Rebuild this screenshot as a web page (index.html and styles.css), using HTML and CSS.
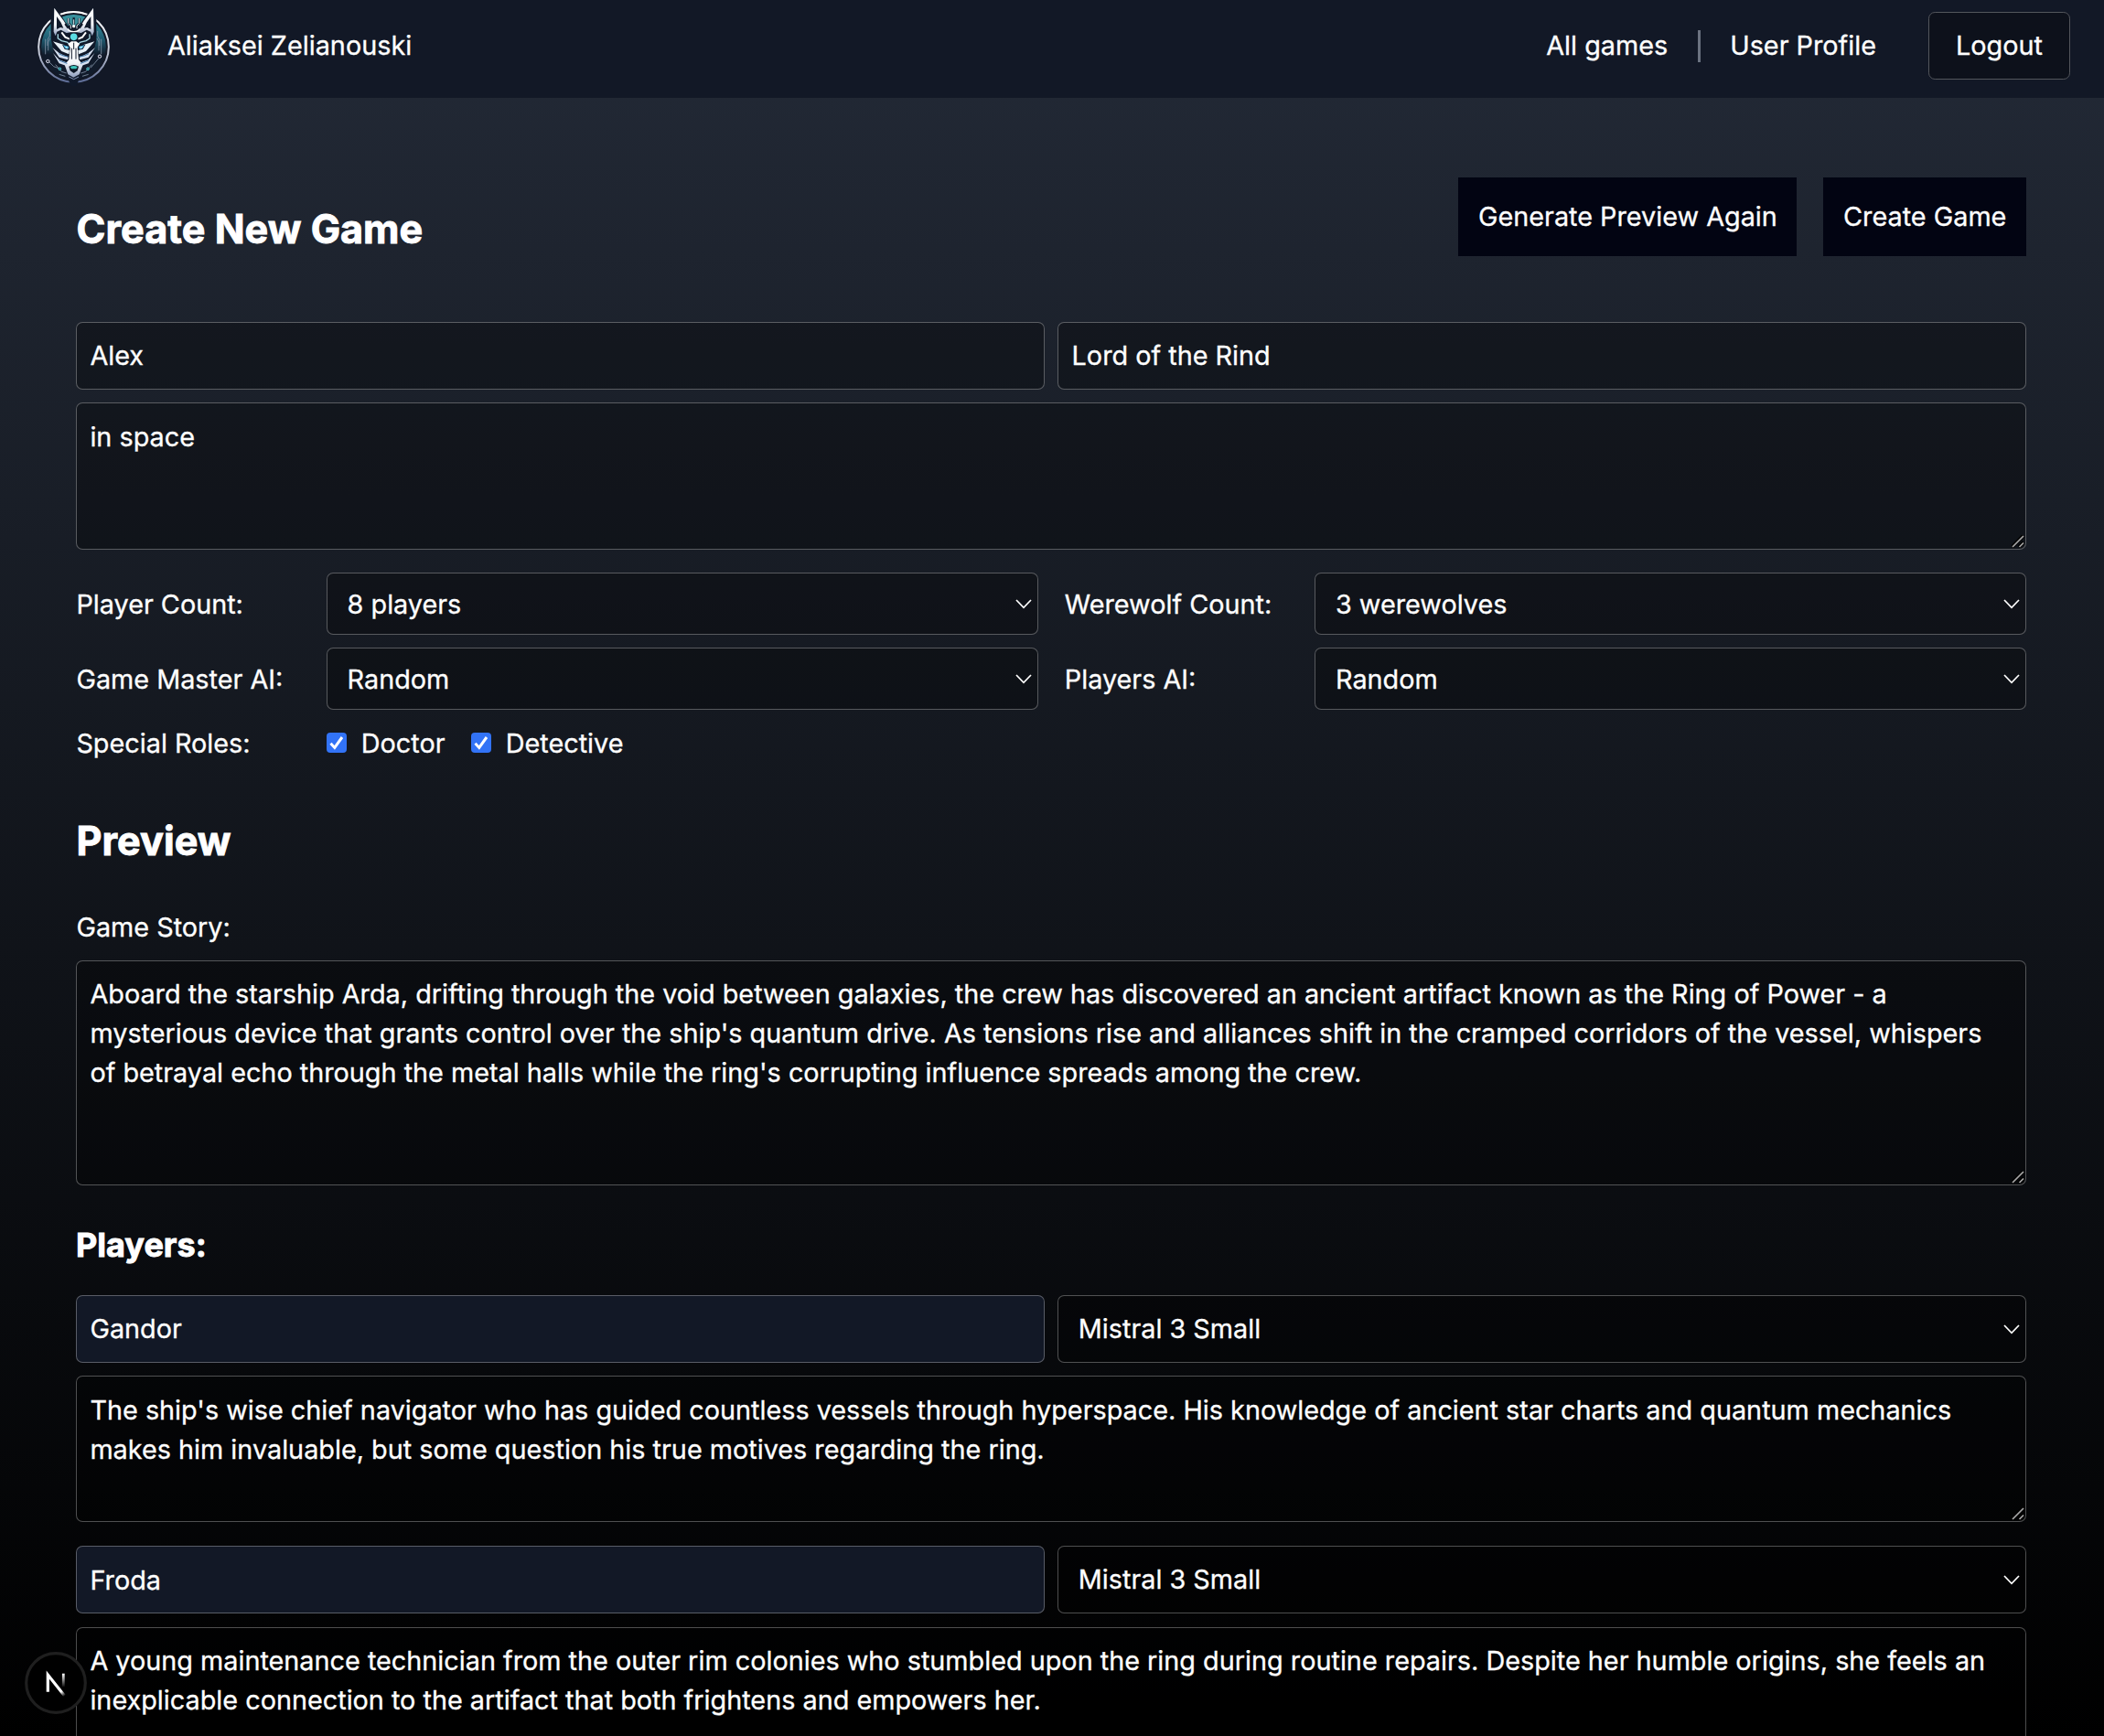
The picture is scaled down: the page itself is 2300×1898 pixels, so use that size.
FILE: index.html
```html
<!DOCTYPE html>
<html lang="en">
<head>
<meta charset="utf-8">
<title>Create New Game</title>
<link rel="stylesheet" href="styles.css">
</head>
<body>
<svg class="defs" width="0" height="0" aria-hidden="true">
  <symbol id="chevron" viewBox="0 0 18 11"><path d="M1 1 L9 9.3 L17 1" fill="none" stroke="#fff" stroke-width="1.7"/></symbol>
  <symbol id="grip" viewBox="0 0 14 14"><path d="M0.5 13 L13 0.5 M8 13 L13 8" fill="none" stroke="#000" stroke-width="4"/><path d="M1 13 L13 1 M8.5 13 L13 8.5" fill="none" stroke="#a9a9a9" stroke-width="1.7"/></symbol>
  <symbol id="check" viewBox="0 0 22 22"><path d="M4.5 11.8 L8.8 16.4 L17 5" fill="none" stroke="#fff" stroke-width="3"/></symbol>
</svg>
<header class="topbar">
  <svg class="logo" viewBox="0 0 300 300" aria-label="Werewolf logo">
    <defs>
      <linearGradient id="ring" x1="0" y1="0" x2="0" y2="1"><stop offset="0" stop-color="#fff"/><stop offset=".55" stop-color="#c9cedb"/><stop offset="1" stop-color="#5c6b95"/></linearGradient>
      <linearGradient id="sky" x1="0" y1="0" x2="0" y2="1"><stop offset="0" stop-color="#3d9fac"/><stop offset=".38" stop-color="#1f5b70"/><stop offset=".62" stop-color="#111b2b"/></linearGradient>
      <linearGradient id="fur" x1="0" y1="0" x2="0" y2="1"><stop offset="0" stop-color="#fff"/><stop offset=".6" stop-color="#f2f4f8"/><stop offset="1" stop-color="#8d9dbd"/></linearGradient>
    </defs>
    <circle cx="151.5" cy="154" r="106" fill="url(#sky)"/>
    <circle cx="151.5" cy="154" r="115" fill="none" stroke="url(#ring)" stroke-width="6"/>
    <path d="M88 22 L76 60 L78 132 L92 200 L130 254 L144 282 L160 282 L172 254 L210 200 L226 132 L226 60 L216 22 L186 60 L118 60 Z" fill="#10192a"/>
    <path d="M113 45 Q151 33 189 45" fill="none" stroke="#fff" stroke-width="5"/>
    <path d="M115 58 Q151 44 187 58 L170 84 L132 84 Z" fill="#398f9b"/>
    <path fill-rule="evenodd" d="M88 26 L119 68 L142 106 L128 108 L110 98 L97 104 L92 118 L86 104 Z M96 54 V96 L108 90 L118 92 L110 74 Z M216 26 L185 68 L162 106 L176 108 L194 98 L207 104 L212 118 L218 104 Z M208 54 V96 L196 90 L186 92 L194 74 Z" fill="url(#fur)"/>
    <path d="M134 60 V76 L142 84 V94 M152 58 V80 M170 60 V76 L162 84 V94 M124 78 L134 92 M180 78 L170 92" fill="none" stroke="#10192a" stroke-width="7"/>
    <path d="M134 60 V76 L142 84 V94 M152 64 V80 M170 60 V76 L162 84 V94" fill="none" stroke="#dfe9ef" stroke-width="3"/>
    <circle cx="152" cy="86" r="5" fill="#fff"/>
    <path d="M132 97 Q152 112 172 97" fill="none" stroke="#fff" stroke-width="5"/>
    <path d="M100 112 V126 L112 134 L130 138 L143 149 V160 M204 112 V126 L192 134 L174 138 L161 149 V160" fill="none" stroke="#a9dbe6" stroke-width="4"/>
    <path d="M112 106 L124 122 L138 128 M192 106 L180 122 L166 128" fill="none" stroke="#fff" stroke-width="6"/>
    <path d="M133 144 L140 156 L136 196 L122 212 L133 244 L151 254 L170 244 L182 212 L168 196 L164 156 L171 144 L160 136 H144 Z" fill="url(#fur)"/>
    <path d="M152 140 V162 M145 158 V194 M159 158 V194" stroke="#10192a" stroke-width="3"/>
    <path d="M84 136 L118 146 L138 166 L136 178 L112 168 Z M220 136 L186 146 L166 166 L168 178 L192 168 Z" fill="#e8f1f8"/>
    <path d="M82 156 L104 174 L134 188 L132 196 L104 188 Z M222 156 L200 174 L170 188 L172 196 L200 188 Z M84 174 L104 196 L132 206 L128 216 L104 208 Z M220 174 L200 196 L172 206 L176 216 L200 208 Z" fill="#d5e0f0"/>
    <path d="M103 176 Q116 184 133 186 M201 176 Q188 184 171 186 M104 198 L130 208 M200 198 L174 208" fill="none" stroke="#3d77aa" stroke-width="3"/>
    <path d="M114 146 L138 152 L136 164 L122 161 Z M190 146 L166 152 L168 164 L182 161 Z" fill="#10192a"/>
    <path d="M117 148 L136 153 L133 161 L124 159 Z M187 148 L168 153 L171 161 L180 159 Z" fill="#50b9e6"/>
    <circle cx="128" cy="155" r="2.5" fill="#c9f6ff"/><circle cx="176" cy="155" r="2.5" fill="#c9f6ff"/>
    <circle cx="152" cy="121" r="15" fill="#10192a"/><circle cx="152" cy="121" r="11.5" fill="#5adce3"/>
    <path d="M136 218 Q152 208 168 218 L164 232 L152 240 L140 232 Z" fill="#0c1725"/>
    <path d="M140 219 Q152 213 164 219 L160 226 H144 Z" fill="#3cc6bd"/>
    <path d="M136 252 L152 260 L168 252" fill="none" stroke="#8091b4" stroke-width="3"/>
    <path d="M73 102 V118 L66 130 V150 M59 128 V178 M74 126 L68 138 V166 M230 102 V118 L236 130 V150 M242 128 V178 M228 126 L234 138 V166 M234 191 L222 205 L207 223 M71 203 L86 218 L102 224 M92 212 L112 235 L128 240 M211 212 L191 235 L175 240 M104 244 L124 250 M200 244 L180 250" fill="none" stroke="#8292a6" stroke-width="2.5"/>
    <circle cx="67" cy="201" r="5" fill="#111827" stroke="#eef" stroke-width="3"/><circle cx="237" cy="185" r="5" fill="#111827" stroke="#eef" stroke-width="3"/>
    <circle cx="106" cy="226" r="4" fill="#205868" stroke="#54cbd3" stroke-width="3"/><circle cx="198" cy="226" r="4" fill="#205868" stroke="#54cbd3" stroke-width="3"/>
  </svg>
  <span class="user-name">Aliaksei Zelianouski</span>
  <nav class="nav">
    <a class="nav-link">All games</a>
    <span class="nav-divider"></span>
    <a class="nav-link">User Profile</a>
    <button class="logout">Logout</button>
  </nav>
</header>
<main class="page">
  <div class="title-row">
    <h1 class="title">Create New Game</h1>
    <div class="actions">
      <button class="action">Generate Preview Again</button>
      <button class="action">Create Game</button>
    </div>
  </div>
  <form class="form">
    <div class="pair">
      <input class="field" value="Alex">
      <input class="field" value="Lord of the Rind">
    </div>
    <div class="area"><textarea class="field area-theme">in space</textarea><svg class="grip"><use href="#grip"/></svg></div>
    <div class="options">
      <div class="option"><label class="option-label">Player Count:</label><div class="select"><select class="field"><option>8 players</option></select><svg class="chevron"><use href="#chevron"/></svg></div></div>
      <div class="option"><label class="option-label">Werewolf Count:</label><div class="select"><select class="field"><option>3 werewolves</option></select><svg class="chevron"><use href="#chevron"/></svg></div></div>
      <div class="option"><label class="option-label">Game Master AI:</label><div class="select"><select class="field"><option>Random</option></select><svg class="chevron"><use href="#chevron"/></svg></div></div>
      <div class="option"><label class="option-label">Players AI:</label><div class="select"><select class="field"><option>Random</option></select><svg class="chevron"><use href="#chevron"/></svg></div></div>
      <div class="option"><span class="option-label">Special Roles:</span><div class="roles">
        <label class="role"><svg class="checkbox"><use href="#check"/></svg><span class="role-name">Doctor</span></label>
        <label class="role"><svg class="checkbox"><use href="#check"/></svg><span class="role-name">Detective</span></label>
      </div></div>
    </div>
    <h2 class="title preview-title">Preview</h2>
    <label class="story-label">Game Story:</label>
    <div class="area"><textarea class="field area-story">Aboard the starship Arda, drifting through the void between galaxies, the crew has discovered an ancient artifact known as the Ring of Power - a mysterious device that grants control over the ship's quantum drive. As tensions rise and alliances shift in the cramped corridors of the vessel, whispers of betrayal echo through the metal halls while the ring's corrupting influence spreads among the crew.</textarea><svg class="grip"><use href="#grip"/></svg></div>
    <h3 class="players-title">Players:</h3>
    <section class="player">
      <div class="pair">
        <input class="field field-name" value="Gandor">
        <div class="select"><select class="field"><option>Mistral 3 Small</option></select><svg class="chevron"><use href="#chevron"/></svg></div>
      </div>
      <div class="area"><textarea class="field area-bio">The ship's wise chief navigator who has guided countless vessels through hyperspace. His knowledge of ancient star charts and quantum mechanics makes him invaluable, but some question his true motives regarding the ring.</textarea><svg class="grip"><use href="#grip"/></svg></div>
    </section>
    <section class="player">
      <div class="pair">
        <input class="field field-name" value="Froda">
        <div class="select"><select class="field"><option>Mistral 3 Small</option></select><svg class="chevron"><use href="#chevron"/></svg></div>
      </div>
      <div class="area"><textarea class="field area-bio">A young maintenance technician from the outer rim colonies who stumbled upon the ring during routine repairs. Despite her humble origins, she feels an inexplicable connection to the artifact that both frightens and empowers her.</textarea><svg class="grip"><use href="#grip"/></svg></div>
    </section>
  </form>
</main>
<svg class="dev-badge" viewBox="0 0 68 68" aria-label="Dev tools">
  <defs>
    <linearGradient id="n1" gradientUnits="userSpaceOnUse" x1="34" y1="36" x2="44" y2="48"><stop stop-color="#fff"/><stop offset=".6" stop-color="#fff"/><stop offset="1" stop-color="#fff" stop-opacity="0"/></linearGradient>
    <linearGradient id="n2" gradientUnits="userSpaceOnUse" x1="0" y1="24" x2="0" y2="39"><stop stop-color="#fff"/><stop offset="1" stop-color="#fff" stop-opacity="0"/></linearGradient>
  </defs>
  <circle cx="34" cy="34" r="32.3" fill="#000" stroke="#1f1f1f" stroke-width="3.2"/>
  <path d="M25.3 43.7 V25 L43.5 48" fill="none" stroke="url(#n1)" stroke-width="3.2"/>
  <path d="M42.3 23.7 V38" fill="none" stroke="url(#n2)" stroke-width="2.8"/>
</svg>
</body>
</html>
```
FILE: styles.css
```css
*, *::before, *::after { box-sizing: border-box; }
html, body { margin: 0; height: 1898px; overflow: hidden; }
body {
  display: flex;
  flex-direction: column;
  background: linear-gradient(to bottom, #232a37, #000);
  color: #fff;
  font: 400 28.8px/43.2px Inter, sans-serif;
  -webkit-text-stroke: .3px #fff;
}
.defs { position: absolute; }
h1, h2, h3 { margin: 0; font-weight: 700; -webkit-text-stroke: .9px #fff; }
button, input, select, textarea { font: inherit; color: inherit; margin: 0; -webkit-text-stroke: inherit; }

.topbar {
  flex: none;
  display: flex;
  align-items: flex-start;
  height: 107px;
  padding: 0 37px 0 30px;
  background: #121826;
}
.logo { flex: none; width: 100px; height: 100px; }
.user-name { margin: 28px 0 0 53px; }
.nav { display: flex; align-items: center; margin: 13px 0 0 auto; }
.nav-divider { width: 3px; height: 35px; margin: 0 32.5px 0 32.5px; background: #6b7280; }
.logout {
  width: 155px;
  height: 74px;
  margin-left: 57px;
  padding: 0;
  border: 1px solid #53565c;
  border-radius: 7.2px;
  background: #0d111b;
}

.page { flex: none; padding: 87px 85px 0 83px; }
.title { padding-left: .6px; font-size: 43.2px; line-height: 57.6px; }
.title-row { display: flex; align-items: center; justify-content: space-between; height: 86px; }
.title-row .title { padding-top: 28px; }
.actions { display: flex; gap: 29px; }
.action { height: 86px; padding: 0 21.6px; border: 0; background: #020412; }

.form { display: flex; flex-direction: column; margin-top: 72px; }
.pair { display: grid; grid-template-columns: 1fr 1fr; gap: 14.4px; margin-bottom: 14.4px; }
.field {
  display: block;
  width: 100%;
  height: 74px;
  padding: 14.4px;
  border: 1px solid rgba(255, 255, 255, .3);
  border-radius: 7.2px;
  outline: 0;
  background: rgba(0, 0, 0, .3);
  appearance: none;
  resize: none;
  overflow: hidden;
}
input.field { padding: 13px 14.4px 15px; }
input.field-name { padding: 14px 14.4px; background: #121826; }
.area { position: relative; }
.area-theme { height: 160.6px; padding-top: 15px; }
.area-bio { height: 160px; padding-top: 14.2px; }
.area-story { height: 245.6px; padding-top: 14px; }
.grip { position: absolute; right: 2px; bottom: 2px; width: 14px; height: 14px; }

.select { position: relative; flex: 1; }
.select .field { padding: 0 21.6px 1px; }
.chevron { position: absolute; right: 7px; top: calc(50% - 5px); width: 18px; height: 11px; }

.options { display: grid; grid-template-columns: 1fr 1fr; gap: 14px 28.8px; margin-top: 25px; }
.options .field { height: 68px; padding: 1.4px 21.6px 0; }
.option { display: flex; align-items: center; height: 68px; }
.option:last-child { height: 43.2px; }
.option-label { flex: none; position: relative; top: 1px; width: 274px; padding-left: .4px; }
.roles { display: flex; gap: 28.4px; }
.role { display: flex; align-items: center; gap: 15.8px; }
.role-name { position: relative; top: 1px; }
.checkbox { width: 22px; height: 22px; border-radius: 4px; background: #3273f6; }

.preview-title { margin-top: 58px; }
.story-label { margin: 43px 0 15px; padding-left: .4px; }
.players-title { margin: 40.6px 0 29.4px; font-size: 36px; line-height: 50.4px; }
.player { margin-bottom: 25.8px; }

.dev-badge { position: fixed; left: 26.5px; top: 1805.5px; width: 68px; height: 68px; }
```
